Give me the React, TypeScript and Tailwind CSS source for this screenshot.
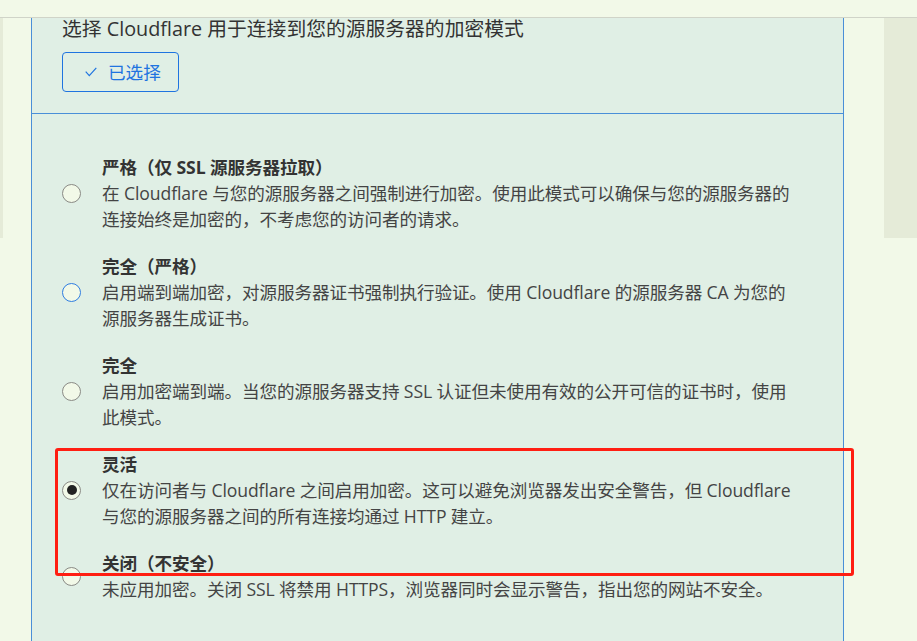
const options = [
  {
    title: "严格（仅 SSL 源服务器拉取）",
    lines: [
      "在 Cloudflare 与您的源服务器之间强制进行加密。使用此模式可以确保与您的源服务器的",
      "连接始终是加密的，不考虑您的访问者的请求。",
    ],
    state: "idle",
  },
  {
    title: "完全（严格）",
    lines: [
      "启用端到端加密，对源服务器证书强制执行验证。使用 Cloudflare 的源服务器 CA 为您的",
      "源服务器生成证书。",
    ],
    state: "focus",
  },
  {
    title: "完全",
    lines: [
      "启用加密端到端。当您的源服务器支持 SSL 认证但未使用有效的公开可信的证书时，使用",
      "此模式。",
    ],
    state: "idle",
  },
  {
    title: "灵活",
    lines: [
      "仅在访问者与 Cloudflare 之间启用加密。这可以避免浏览器发出安全警告，但 Cloudflare",
      "与您的源服务器之间的所有连接均通过 HTTP 建立。",
    ],
    state: "checked",
  },
  {
    title: "关闭（不安全）",
    lines: ["未应用加密。关闭 SSL 将禁用 HTTPS，浏览器同时会显示警告，指出您的网站不安全。"],
    state: "idle",
  },
];

const Radio = ({ state }: { state: string }) => (
  <div
    className={`w-[19px] h-[19px] shrink-0 rounded-full border bg-[#f2f9e8] flex items-center justify-center ${
      state === "focus" ? "border-[#2f7de1]" : "border-[#8a8a85]"
    }`}
  >
    {state === "checked" && <div className="w-[10px] h-[10px] rounded-full bg-[#222]" />}
  </div>
);

const App = () => {
  return (
    <div className="w-[917px] h-[641px] overflow-hidden bg-[#f2f9e8] font-['Open_Sans','Noto_Sans_CJK_SC',sans-serif]">
      {/* 顶部条 */}
      <div className="h-[18px] border-b border-[#d0d4c8]" />
      <div className="flex">
        {/* 左侧背景 */}
        <div className="w-[31px] shrink-0">
          <div className="w-[3px] h-[220px] bg-[#e5ebd8]" />
        </div>

        {/* 主面板 */}
        <div className="relative w-[813px] h-[623px] shrink-0 border-x border-[#4a8fd8] bg-[#e0efe5]">
          <div className="pl-[30px] pb-[21px] border-b border-[#4a8fd8]">
            <h2 className="text-[19.8px] leading-[22px] text-[#333] whitespace-nowrap">
              选择 Cloudflare 用于连接到您的源服务器的加密模式
            </h2>
            <button className="mt-[12px] w-[117px] h-[40px] flex items-center gap-[11px] pl-[22px] rounded-[4px] border border-[#1f74e0] text-[#1f74e0] text-[17.6px]">
              <svg width="12" height="10" viewBox="0 0 12 10" fill="none">
                <polyline points="0.7,4.6 4.3,8.6 11.3,0.8" stroke="#1f74e0" strokeWidth="1.2" />
              </svg>
              <span>已选择</span>
            </button>
          </div>

          {/* 选项列表 */}
          <div className="pt-[40px] pl-[30px] flex flex-col gap-[21px]">
            {options.map((opt) => (
              <div key={opt.title} className="flex items-center gap-[21px]">
                <Radio state={opt.state} />
                <div className="text-[17.6px] leading-[26px] whitespace-nowrap tracking-[-0.1px]">
                  <div className="font-bold text-[#333]">{opt.title}</div>
                  {opt.lines.map((line) => (
                    <div key={line} className="text-[#444]">
                      {line}
                    </div>
                  ))}
                </div>
              </div>
            ))}
          </div>

          {/* 红色标注框 */}
          <div className="absolute left-[23px] top-[430px] w-[799px] h-[128px] border-[3px] border-[#ff1e12] rounded-[3px] pointer-events-none" />
        </div>

        {/* 右侧背景 */}
        <div className="flex-1 flex">
          <div className="w-[40px]" />
          <div className="flex-1 h-[220px] bg-[#e5ebd8]" />
        </div>
      </div>
    </div>
  );
};

export default App;
